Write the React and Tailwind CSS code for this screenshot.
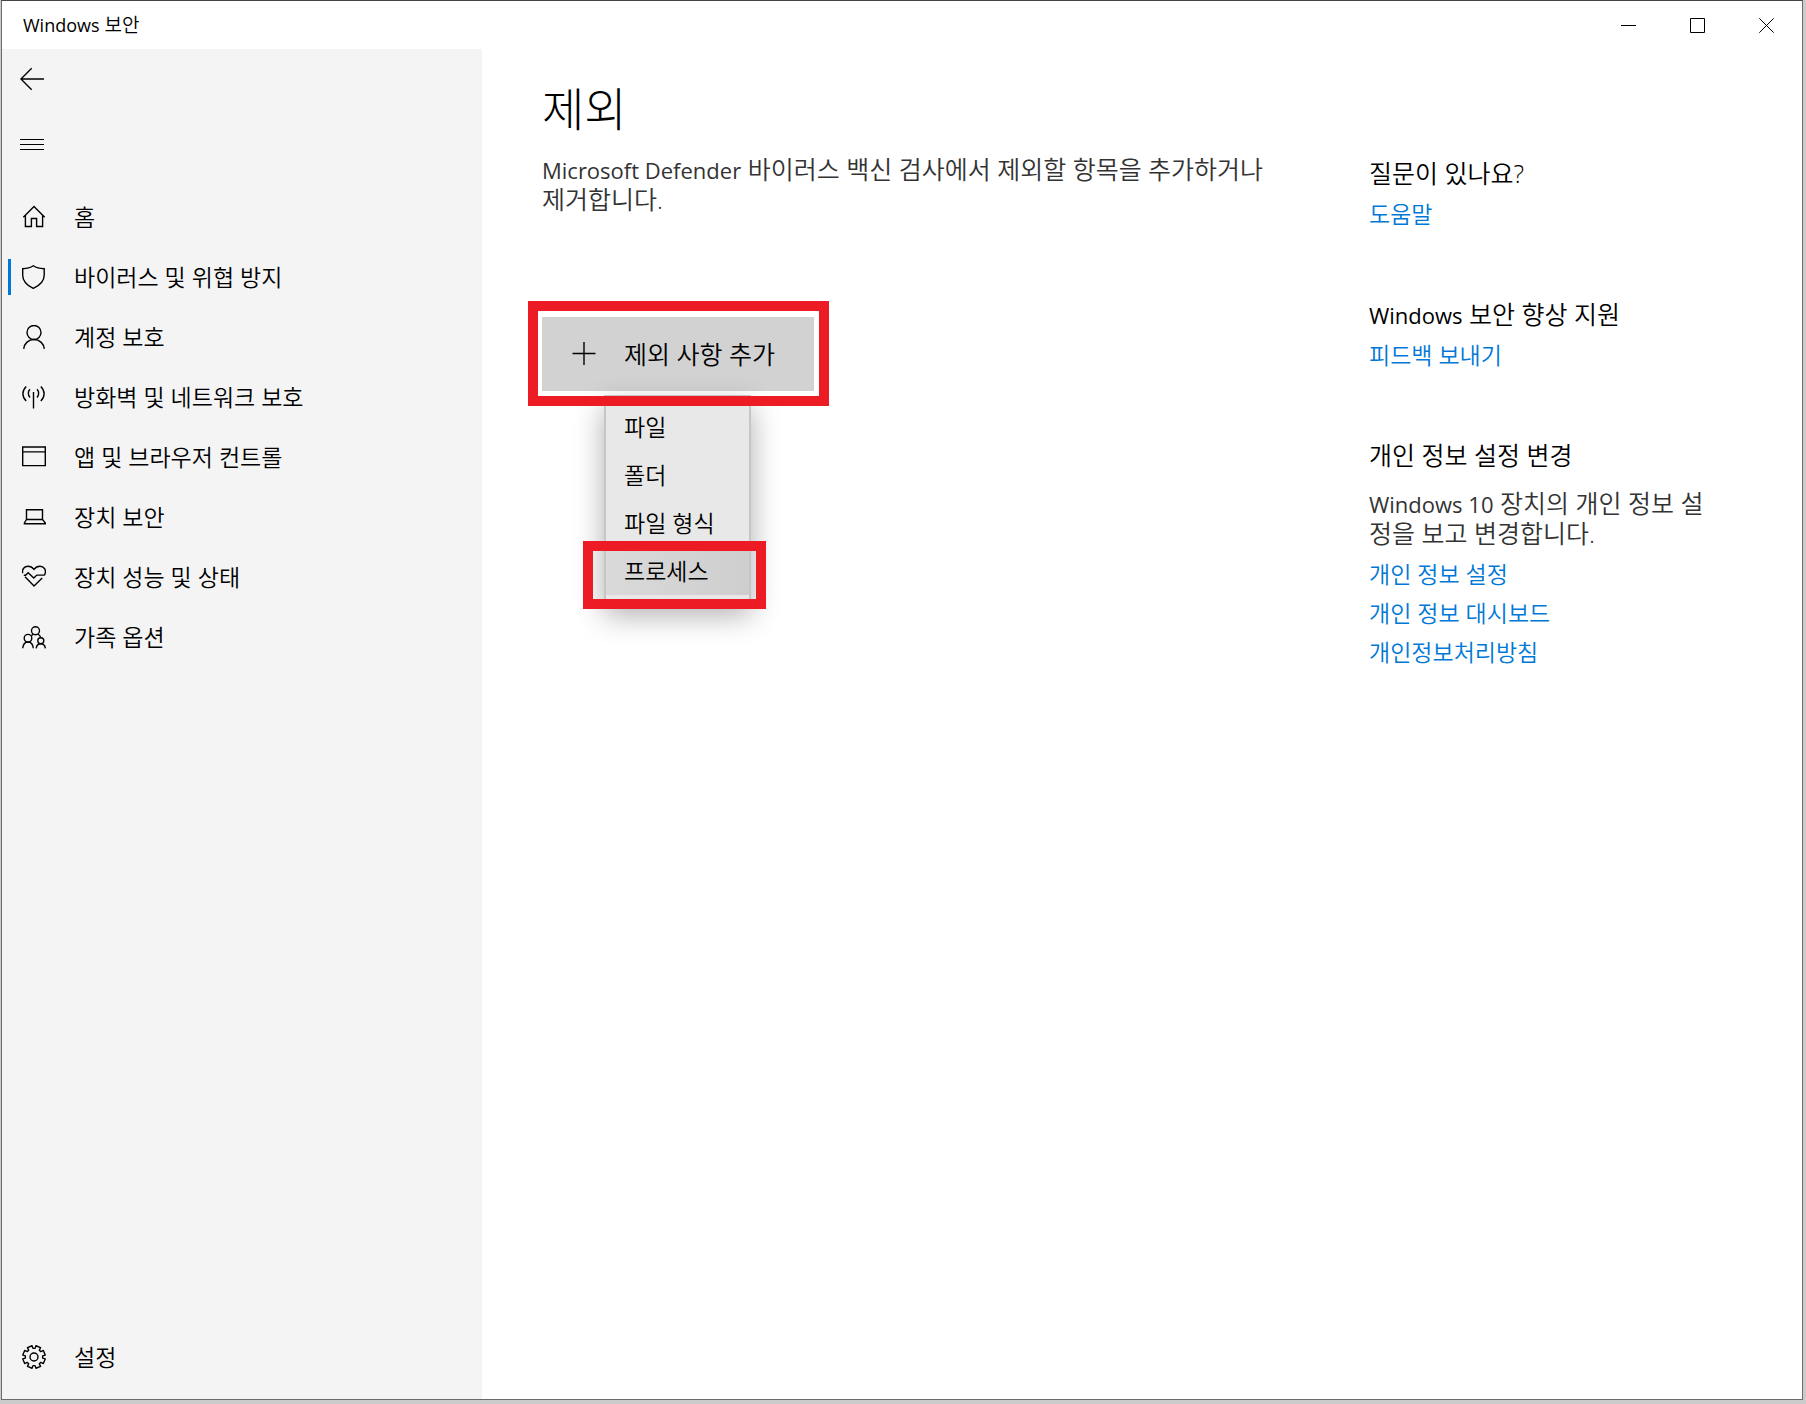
import React from "react";

const icon = {
  width: 24,
  height: 24,
  viewBox: "0 0 24 24",
  fill: "none",
  stroke: "currentColor",
  strokeWidth: 1.4,
  "aria-hidden": true,
};

const HomeIcon = () => (
  <svg {...icon}>
    <path d="M1.3 12.2 12 1.6l10.7 10.6M3.4 10.500v11h6v-8h5.200v8h6v-11" />
  </svg>
);
const ShieldIcon = () => (
  <svg {...icon}>
    <path d="M11.3.8C8.600 2.800 5.200 3.700.7 3.700v6.500c0 6.300 4.300 10.200 10.600 13.200 6.300-3 10.900-6.900 10.900-13.200V3.700C17.600 3.700 14 2.800 11.300.8Z" />
  </svg>
);
const PersonIcon = () => (
  <svg {...icon}>
    <circle cx="12" cy="7.500" r="7" />
    <path d="M1.700 23.900C2.300 18.400 6.500 14.500 12 14.500s9.700 3.900 10.300 9.400" />
  </svg>
);
const SignalIcon = () => (
  <svg {...icon}>
    <path d="M11.500 7v16.500M8 4.300c-2.200 2.200-2.200 5.800 0 8.200M15 4.300c2.200 2.200 2.200 5.800 0 8.200M4.200 1.500c-4.400 4.300-4.400 10.300 0 14.600M18.800 1.500c4.400 4.300 4.400 10.300 0 14.600" />
  </svg>
);
const BrowserIcon = () => (
  <svg {...icon}>
    <path d="M.7 2h22.600v18.600H.7zM.7 6.900h22.600" />
  </svg>
);
const LaptopIcon = () => (
  <svg {...icon}>
    <path d="M4.500 4.700h16v9.800h-16zM4.500 14.500 2.400 18v.7h21V18l-2.900-3.500" />
  </svg>
);
const HeartIcon = () => (
  <svg {...icon}>
    <path d="M.7 8.200C-.2 4.200 2.300 1.200 6 1.200c2.600 0 4.600 1.300 6 3.200 1.400-1.900 3.400-3.200 6-3.200 3.700 0 6.500 3.600 5 7.500-.2.700-.4 1.100-.6 1.500M1.800 10.200h1.800l2.500-2.400 5.700 5.200 3-2.900h7.700M3 11.700l9 9.300 8.200-8" />
  </svg>
);
const FamilyIcon = () => (
  <svg {...icon}>
    <circle cx="13.500" cy="5.700" r="4" />
    <circle cx="6" cy="13.200" r="3.800" />
    <circle cx="18.800" cy="15.800" r="3" />
    <path d="M.7 23.300c.4-3.800 2.400-6.300 5.300-6.300s4.900 2.500 5.300 6.300M14.200 23.300c.4-2.900 2-4.500 4.600-4.500s4.200 1.600 4.600 4.500M9.500 10.800l1.500-2M15.800 9.100c1.500.7 2.600 1.900 3 3.700" />
  </svg>
);

const teeth = 8;
const gearPath = (() => {
  const pts = [];
  for (let i = 0; i < teeth; i++) {
    const base = (i * 2 * Math.PI) / teeth + Math.PI / teeth;
    [
      [-0.27, 8.7],
      [-0.22, 11.4],
      [0.22, 11.4],
      [0.27, 8.7],
    ].forEach(([a, r]) => {
      const x = (12 + r * Math.cos(base + a)).toFixed(2);
      const y = (12 + r * Math.sin(base + a)).toFixed(2);
      pts.push(`${x} ${y}`);
    });
  }
  return `M${pts.join("L")}Z`;
})();
const GearIcon = () => (
  <svg {...icon} strokeLinejoin="round">
    <path d={gearPath} />
    <circle cx="12" cy="12" r="4" />
  </svg>
);

const navItems = [
  { label: "홈", Icon: HomeIcon },
  { label: "바이러스 및 위협 방지", Icon: ShieldIcon, active: true },
  { label: "계정 보호", Icon: PersonIcon },
  { label: "방화벽 및 네트워크 보호", Icon: SignalIcon },
  { label: "앱 및 브라우저 컨트롤", Icon: BrowserIcon },
  { label: "장치 보안", Icon: LaptopIcon },
  { label: "장치 성능 및 상태", Icon: HeartIcon },
  { label: "가족 옵션", Icon: FamilyIcon },
];

// Latin words are set a little smaller so that they balance the Hangul around them.
function Latin({ children }) {
  return <span className="text-[22px] leading-5 font-normal">{children}</span>;
}

function NavItem({ label, Icon, active }) {
  return (
    <a
      href="#"
      aria-current={active ? "page" : undefined}
      className="flex h-15 items-center pl-1.5 text-[23px] leading-[30px]"
    >
      <span className={active ? "h-9 w-[3px] bg-[#0078d7]" : "h-9 w-[3px]"} />
      <span className="ml-[11px] flex w-[52px] shrink-0">
        <Icon />
      </span>
      {label}
    </a>
  );
}

function TitleBar() {
  return (
    <header className="flex h-12 shrink-0 items-center justify-between bg-white pr-px">
      <span className="pl-[21px] text-[19px] leading-6">
        <span className="text-[18px] leading-5 font-normal">Windows</span> 보안
      </span>
      <div className="flex h-full">
        <button aria-label="최소화" className="flex w-[69px] items-center justify-center">
          <svg width="15" height="15" viewBox="0 0 15 15" stroke="currentColor" aria-hidden="true">
            <path d="M0 7.500h15" />
          </svg>
        </button>
        <button aria-label="최대화" className="flex w-[69px] items-center justify-center">
          <svg width="15" height="15" viewBox="0 0 15 15" fill="none" stroke="currentColor" aria-hidden="true">
            <path d="M.5.5h14v14H.5z" />
          </svg>
        </button>
        <button aria-label="닫기" className="flex w-[69px] items-center justify-center">
          <svg width="15" height="15" viewBox="0 0 15 15" stroke="currentColor" aria-hidden="true">
            <path d="m.3.3 14.400 14.400M14.700.3.3 14.700" />
          </svg>
        </button>
      </div>
    </header>
  );
}

function Sidebar() {
  return (
    <aside className="flex w-[480px] shrink-0 flex-col bg-[#f4f4f4]">
      <button aria-label="뒤로" className="flex h-15 w-15 items-center pl-[18px]">
        <svg {...icon}>
          <path d="M24 12H.8M11.700 1.200.9 12l10.800 10.800" />
        </svg>
      </button>
      <button aria-label="메뉴" className="mt-1.5 flex h-15 w-15 items-center pl-[18px]">
        <svg {...icon} strokeWidth="1">
          <path d="M0 6.500h24M0 11.500h24M0 16.500h24" />
        </svg>
      </button>
      <nav className="mt-3 flex flex-1 flex-col pb-3">
        {navItems.map((item) => (
          <NavItem key={item.label} {...item} />
        ))}
        <div className="mt-auto">
          <NavItem label="설정" Icon={GearIcon} />
        </div>
      </nav>
    </aside>
  );
}

function AddExclusion() {
  const item = "flex h-12 w-full items-center pl-[18px] text-left text-[23px] leading-[30px]";
  return (
    <div className="relative mt-[103px] w-[272px]">
      <button className="flex h-[74px] w-full items-center bg-[#d2d2d2] pl-[30px] text-[25px] leading-[30px]">
        <svg {...icon} strokeWidth="1.400" className="mr-7">
          <path d="M.5 11.500h23M12 0v23" />
        </svg>
        제외 사항 추가
      </button>
      <div
        role="menu"
        className="absolute top-[78px] left-[62px] w-[147px] border-2 border-[#c6c6c6] bg-[#e8e8e8] py-1.5 shadow-[0_12px_28px_rgba(0,0,0,0.32)]"
      >
        <button role="menuitem" className={item}>파일</button>
        <button role="menuitem" className={item}>폴더</button>
        <button role="menuitem" className={item}>파일 형식</button>
        <button role="menuitem" className="flex h-12 w-full items-center bg-linear-to-r from-[#dadada] to-[#cecece] pl-[18px] text-left text-[23px] leading-[30px]">
          프로세스
        </button>
      </div>
      <div className="pointer-events-none absolute -top-4 -left-3.5 h-[105px] w-[301px] border-10 border-[#ed1c24]" />
      <div className="pointer-events-none absolute top-56 left-[41px] h-[68px] w-[183px] border-10 border-[#ed1c24]" />
    </div>
  );
}

function HelpSection({ title, text, links }) {
  return (
    <section>
      <h2 className="text-[25px] leading-[30px]">{title}</h2>
      {text && <p className="mt-[18px] text-[25px] leading-[30px] text-[#333]">{text}</p>}
      <ul className="mt-1.5">
        {links.map((link) => (
          <li key={link} className="flex h-[39px] items-center">
            <a href="#" className="text-[23px] leading-[30px] text-[#0078d7]">{link}</a>
          </li>
        ))}
      </ul>
    </section>
  );
}

export default function App() {
  return (
    <div className="flex min-h-screen flex-col bg-[#cbcbcb] pr-[3px] pb-1 pl-px font-['Open_Sans','Noto_Sans_CJK_KR',sans-serif] font-[350] text-black">
      <div className="flex flex-1 flex-col border border-[#6b6b6b] border-t-[#444] bg-white">
        <TitleBar />
        <div className="flex flex-1">
          <Sidebar />
          <main className="flex flex-1 justify-between pr-[82px] pl-[60px]">
            <div className="w-[728px] pt-[29px]">
              <h1 className="text-[46px] leading-[60px] font-light">제외</h1>
              <p className="mt-4 text-[25px] leading-[30px] text-[#333]">
                <Latin>Microsoft Defender</Latin> 바이러스 백신 검사에서 제외할 항목을 추가하거나 제거합니다.
              </p>
              <AddExclusion />
            </div>
            <aside className="flex w-[351px] flex-col gap-[66px] pt-[109px]">
              <HelpSection title="질문이 있나요?" links={["도움말"]} />
              <HelpSection title={<><Latin>Windows</Latin> 보안 향상 지원</>} links={["피드백 보내기"]} />
              <HelpSection
                title="개인 정보 설정 변경"
                text={<><Latin>Windows 10</Latin> 장치의 개인 정보 설정을 보고 변경합니다.</>}
                links={["개인 정보 설정", "개인 정보 대시보드", "개인정보처리방침"]}
              />
            </aside>
          </main>
        </div>
      </div>
    </div>
  );
}
